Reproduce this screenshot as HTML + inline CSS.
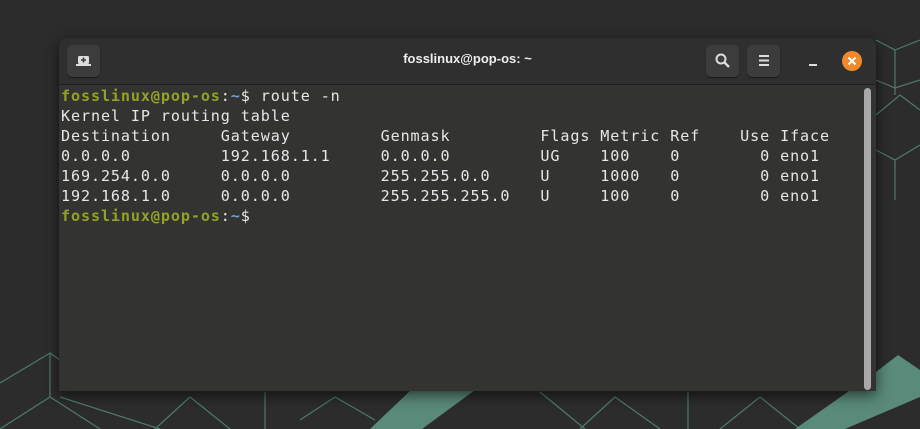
<!DOCTYPE html>
<html><head><meta charset="utf-8"><style>
html,body{margin:0;padding:0;width:920px;height:429px;overflow:hidden;background:#2c2c2c;}
.win{position:absolute;left:59px;top:38px;width:817px;height:353px;background:#333432;border-radius:8px 8px 0 0;box-shadow:0 4px 14px rgba(0,0,0,.6);overflow:hidden;}
.hdr{position:absolute;left:0;top:0;width:100%;height:46px;background:#2f2f2f;border-bottom:1px solid #1f1f1f;}
.btn{position:absolute;top:7px;width:33px;height:32px;background:#3c3c3c;border-radius:5px;box-shadow:0 1px 1px rgba(0,0,0,.5);}
.title{position:absolute;left:0;width:100%;top:13px;text-align:center;color:#eee;font:bold 13px "Liberation Sans",sans-serif;}
.term{position:absolute;left:2px;top:48px;font-family:"DejaVu Sans Mono","Liberation Mono",monospace;font-size:15.1px;line-height:20px;color:#e6e6e6;white-space:pre;letter-spacing:0.9px;}
.g{color:#93a125;font-weight:bold}.b{color:#6c9fd6;font-weight:bold}
.sb{position:absolute;left:805px;top:50px;width:7px;height:302px;background:#a9a9a9;border-radius:4px;}
</style></head><body>
<svg width="920" height="429" style="position:absolute;left:0;top:0">
<g stroke="#4d7a6c" stroke-width="1.2" fill="none">
<path d="M0 383 L50 353 L50 397 M50 353 L60 360 M0 429 L50 397 L100 429"/>
<path d="M60 397 L160 429 M190 397 L155 429 M190 397 L230 429 M265 392 L265 429 M335 397 L300 420 M335 397 L375 420"/>
<path d="M540 392 L585 429 M615 397 L580 429 M615 397 L660 429 M688 392 L688 429 M760 397 L720 429 M760 397 L800 429"/>
<path d="M876 40 L895 50 L920 40 M895 50 L895 88 M876 80 L895 88 L920 80 M895 88 L895 95"/>
<path d="M876 115 L900 95 L920 110 M876 150 L895 160 L920 145 M895 160 L895 200"/>
</g>
<path d="M411 390 L475 390 L422 429 L370 429 Z" fill="#5a8a79"/>
<path d="M898 355 L920 370 L920 397 L845 429 L795 429 L876 372 Z" fill="#5a8a79"/>
</svg>
<div class="win">
<div class="hdr">
<div class="btn" style="left:8px"><svg width="33" height="32"><rect x="11" y="11" width="11" height="8" rx="1.5" fill="#ddd"/><rect x="9" y="19" width="15" height="2" fill="#ddd"/><path d="M16.5 12.5v5M14 15h5" stroke="#3c3c3c" stroke-width="1.6"/></svg></div>
<div class="title">fosslinux@pop-os: ~</div>
<div class="btn" style="left:647px"><svg width="33" height="32"><circle cx="15" cy="14" r="4.5" stroke="#ddd" stroke-width="2" fill="none"/><path d="M18 17l5 5" stroke="#ddd" stroke-width="2.4"/></svg></div>
<div class="btn" style="left:688px"><svg width="33" height="32"><path d="M12 11h10M12 15.5h10M12 20h10" stroke="#ddd" stroke-width="2"/></svg></div>
<div style="position:absolute;left:750px;top:26px;width:8px;height:2px;background:#ddd"></div>
<div style="position:absolute;left:783px;top:13px;width:20px;height:20px;border-radius:50%;background:#f0892c"><svg width="20" height="20"><path d="M6.5 6.5l7 7M13.5 6.5l-7 7" stroke="#fff" stroke-width="2"/></svg></div>
</div>
<div class="term"><span class="g">fosslinux@pop-os</span>:<span class="b">~</span>$ route -n
Kernel IP routing table
Destination     Gateway         Genmask         Flags Metric Ref    Use Iface
0.0.0.0         192.168.1.1     0.0.0.0         UG    100    0        0 eno1
169.254.0.0     0.0.0.0         255.255.0.0     U     1000   0        0 eno1
192.168.1.0     0.0.0.0         255.255.255.0   U     100    0        0 eno1
<span class="g">fosslinux@pop-os</span>:<span class="b">~</span>$</div>
<div class="sb"></div>
</div>
</body></html>
